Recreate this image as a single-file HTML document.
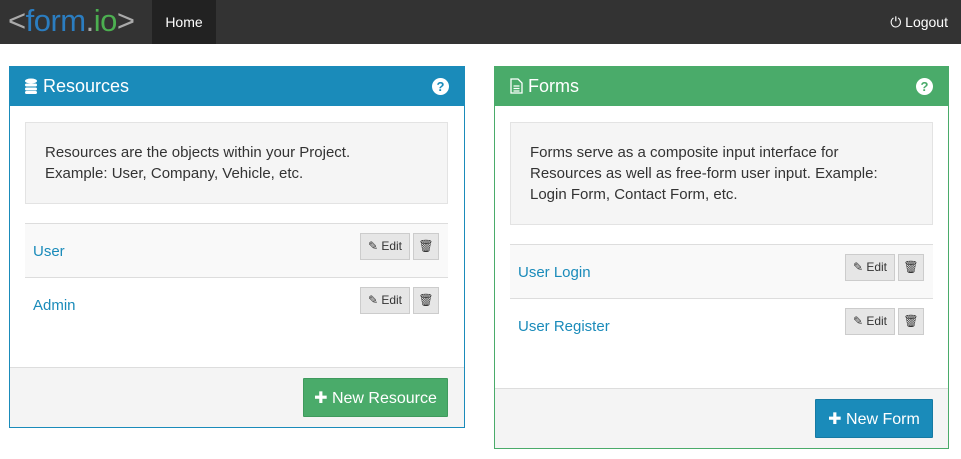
<!DOCTYPE html>
<html><head><style>
*{box-sizing:border-box;margin:0;padding:0}
body{width:961px;height:459px;background:#fff;font-family:"Liberation Sans",sans-serif;position:relative;overflow:hidden;color:#333}
.nav{position:absolute;left:0;top:0;width:961px;height:44px;background:#333}
.logo{position:absolute;left:8px;top:2px;font-size:31px;letter-spacing:-0.5px;line-height:38px}
.home{position:absolute;left:152px;top:0;width:64px;height:44px;background:#222;color:#fff;font-size:14px;text-align:center;line-height:44px}
.logout{position:absolute;right:13px;top:0;line-height:44px;color:#fff;font-size:14px}
.panel{position:absolute;border:1px solid}
.ph{height:39px;color:#fff;font-size:18px;line-height:39px;padding-left:16px;position:relative}
.q{position:absolute;right:15px;top:11px;width:17px;height:17px;border-radius:50%;background:#fff;font-size:13px;font-weight:bold;text-align:center;line-height:17px}
.well{position:absolute;background:#f5f5f5;border:1px solid #e3e3e3;font-size:15px;line-height:21px;padding:19px 19px}
.row{position:absolute;height:54px;border-top:1px solid #ddd;font-size:15px;color:#1a8bba;line-height:56px;padding-left:8px}
.btn{position:absolute;height:27px;top:9px;background:#e6e6e6;border:1px solid #ccc;font-size:12px;line-height:25px;color:#333;text-align:center}
.foot{position:absolute;left:0;right:0;bottom:0;height:60px;background:#f4f4f4;border-top:1px solid #ddd}
.big{position:absolute;height:39px;color:#fff;font-size:16px;line-height:39px;text-align:center;border-radius:1px}
</style></head><body>
<div class="nav">
<div class="logo"><span style="color:#aaa">&lt;</span><span style="color:#2b7dc0">form</span><span style="color:#aaa">.</span><span style="color:#4caf50">io</span><span style="color:#aaa">&gt;</span></div>
<div class="home">Home</div>
<div class="logout">⏻ Logout</div>
</div>

<div class="panel" style="left:9px;top:66px;width:456px;height:362px;border-color:#1a8bba">
<div class="ph" style="background:#1a8bba;padding-left:14px"><svg width="14" height="16" style="vertical-align:-2px"><ellipse cx="7" cy="3" rx="6" ry="2.5" fill="#fff"/><rect x="1" y="5.5" width="12" height="3" rx="1.5" fill="#fff"/><rect x="1" y="9.5" width="12" height="3" rx="1.5" fill="#fff"/><rect x="1" y="13" width="12" height="3" rx="1.5" fill="#fff"/></svg> Resources<div class="q" style="color:#1a8bba">?</div></div>
<div class="well" style="left:15px;top:55px;width:423px;height:82px">Resources are the objects within your Project.<br>Example: User, Company, Vehicle, etc.</div>
<div class="row" style="left:15px;top:156px;width:423px;background:#f9f9f9">User<div class="btn" style="left:335px;width:50px">✎ Edit</div><div class="btn" style="left:388px;width:26px">🗑</div></div>
<div class="row" style="left:15px;top:210px;width:423px">Admin<div class="btn" style="left:335px;width:50px">✎ Edit</div><div class="btn" style="left:388px;width:26px">🗑</div></div>
<div class="foot"><div class="big" style="left:293px;top:10px;width:145px;background:#4aab6a;border:1px solid #3f9a5d">✚ New Resource</div></div>
</div>

<div class="panel" style="left:494px;top:66px;width:455px;height:383px;border-color:#4aab6a">
<div class="ph" style="background:#4aab6a;padding-left:15px"><svg width="13" height="16" style="vertical-align:-2px"><path d="M1 1h7l4 4v10H1z" fill="none" stroke="#fff" stroke-width="1.3"/><path d="M3.5 8h6M3.5 10.5h6M3.5 13h6" stroke="#fff" stroke-width="1.2"/></svg> Forms<div class="q" style="color:#4aab6a">?</div></div>
<div class="well" style="left:15px;top:55px;width:423px;height:103px">Forms serve as a composite input interface for Resources as well as free-form user input. Example: Login Form, Contact Form, etc.</div>
<div class="row" style="left:15px;top:177px;width:423px;background:#f9f9f9">User Login<div class="btn" style="left:335px;width:50px">✎ Edit</div><div class="btn" style="left:388px;width:26px">🗑</div></div>
<div class="row" style="left:15px;top:231px;width:423px">User Register<div class="btn" style="left:335px;width:50px">✎ Edit</div><div class="btn" style="left:388px;width:26px">🗑</div></div>
<div class="foot"><div class="big" style="left:320px;top:10px;width:118px;background:#1a8bba;border:1px solid #167aa3">✚ New Form</div></div>
</div>
</body></html>
